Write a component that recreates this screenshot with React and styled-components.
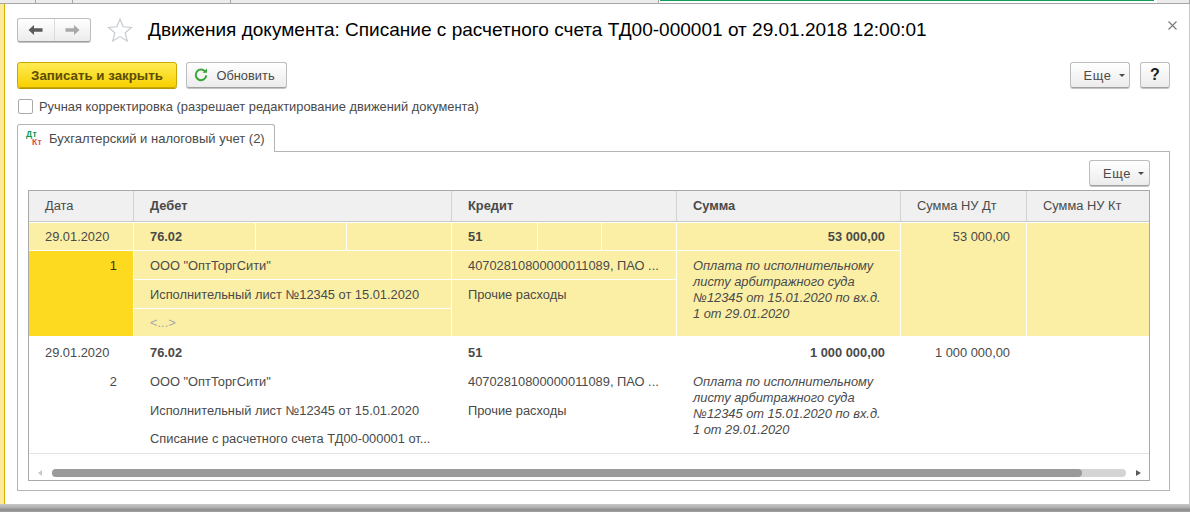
import React from 'react';
import styled, { createGlobalStyle } from 'styled-components';

const GlobalStyle = createGlobalStyle`
    html, body {
        margin: 0;
        padding: 0;
        background: #ffffff;
    }
    body {
        font-family: "Liberation Sans", Arial, sans-serif;
        font-size: 12.85px;
        color: #4a4a4a;
        overflow: hidden;
    }
    * {
        box-sizing: border-box;
    }
`;

const Window = styled.div`
    width: 1190px;
    height: 512px;
    display: flex;
    flex-direction: column;
    overflow: hidden;
`;

const TopStrip = styled.div`
    height: 4px;
    flex: none;
    display: flex;
    border-bottom: 1px solid #a6a6a6;
`;

const TopTab = styled.div`
    width: ${p => p.$w}px;
    flex: ${p => (p.$grow ? 1 : 'none')};
    background: ${p => (p.$active ? '#ffffff' : '#ececec')};
    border-right: ${p => (p.$active ? 'none' : '1px solid #a6a6a6')};
    padding: 0 ${p => (p.$active ? 3 : 0)}px 0 ${p => (p.$active ? 1 : 0)}px;

    &::before {
        content: '';
        display: ${p => (p.$active ? 'block' : 'none')};
        height: 1px;
        background: #0f9d58;
    }
`;

const Middle = styled.div`
    flex: 1;
    display: flex;
    min-height: 0;
`;

const LeftStrip = styled.div`
    width: 5px;
    flex: none;
    background: #fbec9c;
    border-right: 1px solid #d8b600;
`;

const Form = styled.div`
    flex: 1;
    min-width: 0;
    padding: 12px 19px 0 12px;
    display: flex;
    flex-direction: column;
    border-right: 1px solid #c8c8c8;
`;

const BottomStrip = styled.div`
    height: 8px;
    flex: none;
    background: linear-gradient(#c8c8c8, #a8a8a8 55%, #8a8a8a 62%, #a0a0a0);
`;

const Header = styled.div`
    display: flex;
    align-items: center;
    height: 28px;
`;

const NavGroup = styled.div`
    display: flex;
    width: 74px;
    height: 24px;
    border: 1px solid #bdbdbd;
    border-bottom-color: #a0a0a0;
    border-radius: 3px;
    background: linear-gradient(#ffffff, #ececec);
    box-shadow: 0 1px 0 #c4c4c4;
`;

const NavButton = styled.div`
    flex: 1;
    display: flex;
    align-items: center;
    justify-content: center;

    & + & {
        border-left: 1px solid #dcdcdc;
    }
`;

const StarIcon = styled.svg`
    width: 26px;
    height: 26px;
    margin-left: 16px;
    flex: none;
`;

const Title = styled.h1`
    margin: 0 0 0 15px;
    font-size: 19.05px;
    font-weight: 400;
    color: #000000;
    flex: 1;
    white-space: nowrap;
`;

const CloseMark = styled.svg`
    width: 9px;
    height: 9px;
    margin-right: -7px;
    margin-top: -10px;
`;

const Toolbar = styled.div`
    display: flex;
    align-items: center;
    margin-top: 18px;
    height: 26px;
    gap: 9px;
`;

const Button = styled.div`
    height: 26px;
    width: ${p => p.$w}px;
    display: flex;
    align-items: center;
    justify-content: center;
    flex: none;
    gap: 7px;
    border: 1px solid #bdbdbd;
    border-bottom-color: #a0a0a0;
    border-radius: 3px;
    background: linear-gradient(#ffffff, #ececec);
    box-shadow: 0 1px 0 #c4c4c4;
    color: #4a4a4a;
`;

const PrimaryButton = styled(Button)`
    background: linear-gradient(#ffec55, #f8d000);
    border-color: #c9a800;
    box-shadow: 0 1px 0 #b89a00;
    font-weight: 700;
    color: #5a4d00;
    font-size: 13.3px;
`;

const RefreshButton = styled(Button)`
    gap: 8px;
    padding-right: 4px;
`;

const MoreButton = styled(Button)`
    padding-left: 8px;
    letter-spacing: 0.7px;
`;

const HelpButton = styled(Button)`
    font-weight: 700;
    font-size: 16px;
    color: #1e1e1e;
    margin-left: 1px;
`;

const Spacer = styled.div`
    flex: 1;
`;

const Caret = styled.span`
    width: 0;
    height: 0;
    border-left: 3px solid transparent;
    border-right: 3px solid transparent;
    border-top: 3px solid #4a4a4a;
    margin-top: 1px;
`;

const CheckRow = styled.label`
    display: flex;
    align-items: center;
    margin-top: 10px;
    height: 16px;
    padding-left: 1px;
    gap: 6px;
    font-size: 12.87px;
`;

const CheckBox = styled.span`
    width: 15px;
    height: 15px;
    border: 1px solid #a9a9a9;
    border-radius: 2px;
    background: #ffffff;
`;

const Tabs = styled.div`
    display: flex;
    margin-top: 10px;
`;

const Tab = styled.div`
    width: 258px;
    height: 28px;
    display: flex;
    align-items: center;
    padding-left: 8px;
    gap: 3px;
    background: #ffffff;
    border: 1px solid #b4b4b4;
    border-bottom: none;
    border-radius: 3px 3px 0 0;
    margin-bottom: -1px;
    position: relative;
    z-index: 1;
    font-size: 13px;
`;

const AccountMark = styled.span`
    width: 20px;
    display: flex;
    flex-direction: column;
    font-size: 8.5px;
    letter-spacing: 0.4px;
    font-weight: 700;
    line-height: 8px;
    margin-top: -1px;
`;

const MarkDebit = styled.span`
    color: #0a9a55;
`;

const MarkCredit = styled.span`
    color: #e0494b;
    padding-left: 6px;
`;

const Panel = styled.div`
    height: 340px;
    border: 1px solid #b4b4b4;
    padding: 8px 19px 9px 10px;
    display: flex;
    flex-direction: column;
`;

const PanelBar = styled.div`
    display: flex;
    justify-content: flex-end;
    margin-bottom: 4px;
`;

const Table = styled.div`
    flex: 1;
    border: 1px solid #a9a9a9;
    display: flex;
    flex-direction: column;
    min-height: 0;
`;

const HeadRow = styled.div`
    display: grid;
    grid-template-columns: 105px 318px 225px 224px 126px 1fr;
    height: 31px;
    background: #f0f0f0;
    border-bottom: 1px solid #c8c8c8;
`;

const HeadCell = styled.div`
    display: flex;
    align-items: center;
    padding: 0 0 2px 16px;
    font-weight: ${p => (p.$bold ? 700 : 400)};
    border-right: 1px solid #d2d2d2;

    &:last-child {
        border-right: none;
    }
`;

const Row = styled.div`
    display: grid;
    grid-template-columns: 105px 318px 225px 224px 126px 1fr;
    height: ${p => (p.$selected ? 113 : 116)}px;
    margin-top: ${p => (p.$selected ? 1 : 2)}px;
    padding-top: ${p => (p.$selected ? 0 : 1)}px;
    background: ${p => (p.$selected ? '#fbefa5' : '#ffffff')};
    border-bottom: ${p => (p.$selected ? 'none' : '1px solid #e4e4e4')};
`;

const Column = styled.div`
    display: flex;
    flex-direction: column;
    min-width: 0;
    border-right: 1px solid ${p => (p.$selected ? '#ffffff' : 'transparent')};

    &:last-child {
        border-right: none;
    }
`;

const Line = styled.div`
    height: ${p => p.$h || 29}px;
    flex: ${p => (p.$fill ? 1 : 'none')};
    display: flex;
    align-items: center;
    padding: 0 ${p => p.$right || 0}px 0 16px;
    justify-content: ${p => (p.$end ? 'flex-end' : 'flex-start')};
    font-weight: ${p => (p.$bold ? 700 : 400)};
    color: ${p => p.$color || 'inherit'};
    white-space: nowrap;
    border-bottom: 1px solid ${p => (p.$sep ? '#ffffff' : 'transparent')};
`;

const NumberCell = styled.div`
    flex: 1;
    padding: 7px 16px 0 0;
    text-align: right;
    color: ${p => (p.$selected ? '#3c3300' : 'inherit')};
    background: ${p => (p.$selected ? '#fdd91f' : 'transparent')};
`;

const SplitLine = styled.div`
    height: 28px;
    flex: none;
    display: grid;
    grid-template-columns: ${p => p.$cols};
    border-bottom: 1px solid ${p => (p.$sep ? '#ffffff' : 'transparent')};
`;

const SplitCell = styled.div`
    display: flex;
    align-items: center;
    padding-left: 16px;
    font-weight: 700;
    border-right: 1px solid ${p => (p.$sep ? '#ffffff' : 'transparent')};

    &:last-child {
        border-right: none;
    }
`;

const Comment = styled.div`
    padding: 7px 0 0 16px;
    font-style: italic;
    line-height: 16px;
    white-space: nowrap;
`;

const ScrollBar = styled.div`
    flex: 1;
    display: flex;
    align-items: flex-end;
    padding: 0 8px 3px 9px;
    gap: 10px;
`;

const ScrollTrack = styled.div`
    flex: 1;
    height: 8px;
    border-radius: 4px;
    background: #d4d4d4;
`;

const ScrollThumb = styled.div`
    height: 8px;
    border-radius: 4px;
    background: #9a9a9a;
`;

const ScrollArrow = styled.span`
    width: 0;
    height: 0;
    margin-bottom: 1px;
    border-top: 3.5px solid transparent;
    border-bottom: 3.5px solid transparent;
    ${p => (p.$left
        ? 'border-right: 4px solid #c8c8c8;'
        : 'border-left: 5px solid #5a5a5a;')}
`;

const Arrow = ({ left, color }) => (
    <svg width="15" height="12" viewBox="0 0 15 12">
        <path
            d={left ? 'M0.5 6 L6 1 V4.3 H14.5 V7.7 H6 V11 Z' : 'M14.5 6 L9 1 V4.3 H0.5 V7.7 H9 V11 Z'}
            fill={color}
        />
    </svg>
);

const rows = [
    {
        date: '29.01.2020',
        num: 1,
        debit: '76.02',
        credit: '51',
        sum: '53 000,00',
        third: '<...>',
        thirdColor: '#a8a8a8',
        selected: true,
        nu: '53 000,00',
    },
    {
        date: '29.01.2020',
        num: 2,
        debit: '76.02',
        credit: '51',
        sum: '1 000 000,00',
        third: 'Списание с расчетного счета ТД00-000001 от...',
        selected: false,
        nu: '1 000 000,00',
    },
];

const DocRow = ({ row }) => {
    const sel = row.selected;
    return (
        <Row $selected={sel}>
            <Column $selected={sel}>
                <Line $h={28} $sep={sel}>{row.date}</Line>
                <NumberCell $selected={sel}>{row.num}</NumberCell>
            </Column>
            <Column $selected={sel}>
                <SplitLine $cols="122px 91px 1fr" $sep={sel}>
                    <SplitCell $sep={sel}>{row.debit}</SplitCell>
                    <SplitCell $sep={sel} />
                    <SplitCell />
                </SplitLine>
                <Line $sep={sel}>ООО "ОптТоргСити"</Line>
                <Line $sep={sel}>Исполнительный лист №12345 от 15.01.2020</Line>
                <Line $fill $color={row.thirdColor}>{row.third}</Line>
            </Column>
            <Column $selected={sel}>
                <SplitLine $cols="86px 64px 1fr" $sep={sel}>
                    <SplitCell $sep={sel}>{row.credit}</SplitCell>
                    <SplitCell $sep={sel} />
                    <SplitCell />
                </SplitLine>
                <Line $sep={sel}>40702810800000011089, ПАО ...</Line>
                <Line>Прочие расходы</Line>
            </Column>
            <Column $selected={sel}>
                <Line $h={28} $sep={sel} $bold $end $right={15}>{row.sum}</Line>
                <Comment>
                    Оплата по исполнительному<br />
                    листу арбитражного суда<br />
                    №12345 от 15.01.2020 по вх.д.<br />
                    1 от 29.01.2020
                </Comment>
            </Column>
            <Column $selected={sel}>
                <Line $h={28} $end $right={16}>{row.nu}</Line>
            </Column>
            <Column />
        </Row>
    );
};

const App = () => {
    return (
        <Window>
            <GlobalStyle />
            <TopStrip>
                <TopTab $w={36} />
                <TopTab $w={37} />
                <TopTab $w={158} />
                <TopTab $w={428} />
                <TopTab $grow $active />
                <TopTab $w={33} />
            </TopStrip>
            <Middle>
                <LeftStrip />
                <Form>
                    <Header>
                        <NavGroup>
                            <NavButton><Arrow left color="#5a5a5a" /></NavButton>
                            <NavButton><Arrow color="#a8a8a8" /></NavButton>
                        </NavGroup>
                        <StarIcon viewBox="0 0 26 26">
                            <path
                                d="M13 2 L16.2 9.8 L24.6 10.4 L18.2 15.8 L20.2 24 L13 19.6 L5.8 24 L7.8 15.8 L1.4 10.4 L9.8 9.8 Z"
                                fill="#ffffff"
                                stroke="#c4ccd0"
                                strokeWidth="1.2"
                            />
                        </StarIcon>
                        <Title>Движения документа: Списание с расчетного счета ТД00-000001 от 29.01.2018 12:00:01</Title>
                        <CloseMark viewBox="0 0 9 9">
                            <path d="M0.5 0.5 L8.5 8.5 M8.5 0.5 L0.5 8.5" stroke="#7a7a7a" strokeWidth="1.1" />
                        </CloseMark>
                    </Header>
                    <Toolbar>
                        <PrimaryButton $w={160}>Записать и закрыть</PrimaryButton>
                        <RefreshButton $w={101}>
                            <svg width="14" height="14" viewBox="0 0 14 14">
                                <path d="M11.6 4.2 A5.3 5.3 0 1 0 12.3 7.4" fill="none" stroke="#3aa63a" strokeWidth="2" />
                                <path d="M8.6 4.8 H13 V0.6 Z" fill="#3aa63a" />
                            </svg>
                            Обновить
                        </RefreshButton>
                        <Spacer />
                        <MoreButton $w={60}>Еще <Caret /></MoreButton>
                        <HelpButton $w={30}>?</HelpButton>
                    </Toolbar>
                    <CheckRow>
                        <CheckBox />
                        Ручная корректировка (разрешает редактирование движений документа)
                    </CheckRow>
                    <Tabs>
                        <Tab>
                            <AccountMark>
                                <MarkDebit>Дт</MarkDebit>
                                <MarkCredit>Кт</MarkCredit>
                            </AccountMark>
                            Бухгалтерский и налоговый учет (2)
                        </Tab>
                    </Tabs>
                    <Panel>
                        <PanelBar>
                            <MoreButton $w={61}>Еще <Caret /></MoreButton>
                        </PanelBar>
                        <Table>
                            <HeadRow>
                                <HeadCell>Дата</HeadCell>
                                <HeadCell $bold>Дебет</HeadCell>
                                <HeadCell $bold>Кредит</HeadCell>
                                <HeadCell $bold>Сумма</HeadCell>
                                <HeadCell>Сумма НУ Дт</HeadCell>
                                <HeadCell>Сумма НУ Кт</HeadCell>
                            </HeadRow>
                            {rows.map(row => <DocRow key={row.num} row={row} />)}
                            <ScrollBar>
                                <ScrollArrow $left />
                                <ScrollTrack>
                                    <ScrollThumb style={{ width: `${(1030 / 1074) * 100}%` }} />
                                </ScrollTrack>
                                <ScrollArrow />
                            </ScrollBar>
                        </Table>
                    </Panel>
                </Form>
            </Middle>
            <BottomStrip />
        </Window>
    );
};

export default App;
